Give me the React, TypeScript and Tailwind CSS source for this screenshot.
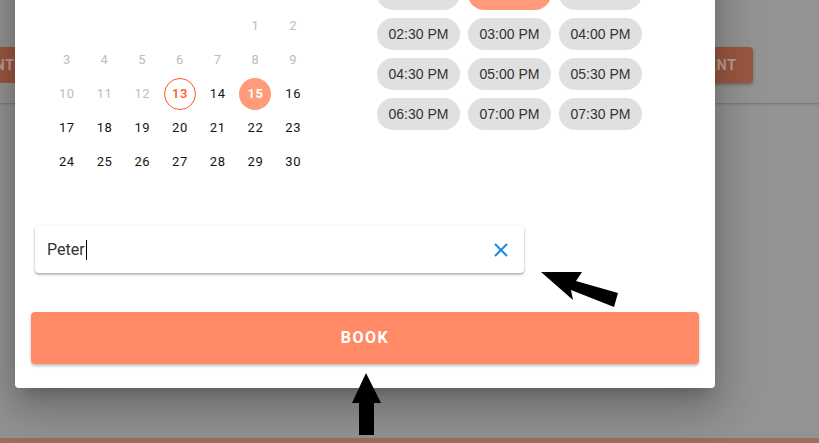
import React from "react";

const rows: (number | null)[][] = [
  [null, null, null, null, null, 1, 2],
  [3, 4, 5, 6, 7, 8, 9],
  [10, 11, 12, 13, 14, 15, 16],
  [17, 18, 19, 20, 21, 22, 23],
  [24, 25, 26, 27, 28, 29, 30],
];

const slots = [
  ["", "", ""],
  ["02:30 PM", "03:00 PM", "04:00 PM"],
  ["04:30 PM", "05:00 PM", "05:30 PM"],
  ["06:30 PM", "07:00 PM", "07:30 PM"],
];

function Day({ d }: { d: number | null }) {
  if (d === null) return <div className="h-[34px]" />;
  if (d === 13)
    return (
      <div className="h-[34px] flex items-center justify-center">
        <div className="w-[32px] h-[32px] rounded-full border border-[#ff5722] flex items-center justify-center text-[#ff5722] font-medium text-[13px] tracking-[0.5px]">
          13
        </div>
      </div>
    );
  if (d === 15)
    return (
      <div className="h-[34px] flex items-center justify-center">
        <div className="w-[32px] h-[32px] rounded-full bg-[#ff9a7a] flex items-center justify-center text-white font-bold text-[13px] tracking-[0.5px]">
          15
        </div>
      </div>
    );
  const disabled = d < 13;
  return (
    <div
      className={
        "h-[34px] flex items-center justify-center text-[13px] tracking-[0.6px] " +
        (disabled ? "text-[#bdbdbd]" : "text-[#141414]")
      }
    >
      {d}
    </div>
  );
}

export default function App() {
  return (
    <div
      className="relative w-[819px] h-[443px] overflow-hidden bg-[#939393]"
      style={{ fontFamily: "Roboto, 'Liberation Sans', sans-serif" }}
    >
      {/* background page */}
      <div className="flex flex-col h-full">
        <div className="h-[104px] flex items-start justify-between pt-[47px] border-b border-[#7c7c7c] shadow-[0_1px_2px_rgba(0,0,0,0.1)]">
          <div className="h-[36px] w-[90px] -ml-[60px] bg-[#9a5740] rounded-[4px] flex items-center justify-end pr-[15px] text-[#b9a09a] font-bold text-[14px] tracking-[1px]">
            MENT
          </div>
          <div className="h-[36px] w-[90px] mr-[66px] bg-[#9a5740] rounded-[4px] shadow-[0_2px_3px_rgba(0,0,0,0.25)] flex items-center justify-end pr-[16px] text-[#b9a09a] font-bold text-[14px] tracking-[1px]">
            MENT
          </div>
        </div>
        <div className="flex-1" />
        <div className="h-[5px] bg-[#9b6f5a]" />
      </div>

      {/* modal */}
      <div className="absolute left-[15px] top-[-60px] w-[700px] h-[448px] bg-white rounded-[4px] shadow-[0_11px_15px_-7px_rgba(0,0,0,0.2),0_24px_38px_3px_rgba(0,0,0,0.14),0_9px_46px_8px_rgba(0,0,0,0.12)] flex flex-col">
        <div className="flex h-[286px]">
          <div className="pl-[33px] pt-[69px] w-[362px]">
            <div className="grid grid-cols-7 w-[264px]">
              {rows.flat().map((d, i) => (
                <Day key={i} d={d} />
              ))}
            </div>
          </div>
          <div className="pt-[38px] flex flex-col gap-[8px]">
            {slots.map((r, ri) => (
              <div key={ri} className="flex gap-[8px]">
                {r.map((s, si) => (
                  <div
                    key={si}
                    className={
                      "w-[83px] h-[32px] rounded-full flex items-center justify-center text-[14px] text-[#333333] " +
                      (ri === 0 && si === 1 ? "bg-[#ff9a7a]" : "bg-[#e0e0e0]")
                    }
                    style={{ fontFamily: "'Liberation Sans', Arial, sans-serif" }}
                  >
                    {s}
                  </div>
                ))}
              </div>
            ))}
          </div>
        </div>
        <div className="pl-[20px]">
          <div className="w-[489px] h-[47px] bg-white rounded-[4px] shadow-[0_1px_3px_rgba(0,0,0,0.25),0_2px_2px_rgba(0,0,0,0.14)] flex items-center pl-[12px] pr-[16px]">
            <span className="text-[16px] text-[#333333]">Peter</span>
            <span className="w-[1px] h-[20px] bg-black ml-[1px]" />
            <div className="flex-1" />
            <svg width="14" height="14" viewBox="0 0 14 14">
              <path d="M1 1 L13 13 M13 1 L1 13" stroke="#1e88e5" strokeWidth="2" />
            </svg>
          </div>
        </div>
        <div className="px-[16px] mt-[39px]">
          <div className="h-[52px] bg-[#ff8a65] rounded-[4px] shadow-[0_2px_3px_rgba(0,0,0,0.25)] flex items-center justify-center text-white font-bold text-[16px] tracking-[1.5px]">
            BOOK
          </div>
        </div>
      </div>

      {/* annotation arrows */}
      <svg className="absolute left-0 top-0" width="819" height="443" viewBox="0 0 819 443">
        <polygon points="541,272 582,272 576,281 618,293 614,307 571,290 573,300" fill="#000" />
        <polygon points="366,373 381,403 374,403 374,435 359,435 359,403 352,403" fill="#000" />
      </svg>
    </div>
  );
}
